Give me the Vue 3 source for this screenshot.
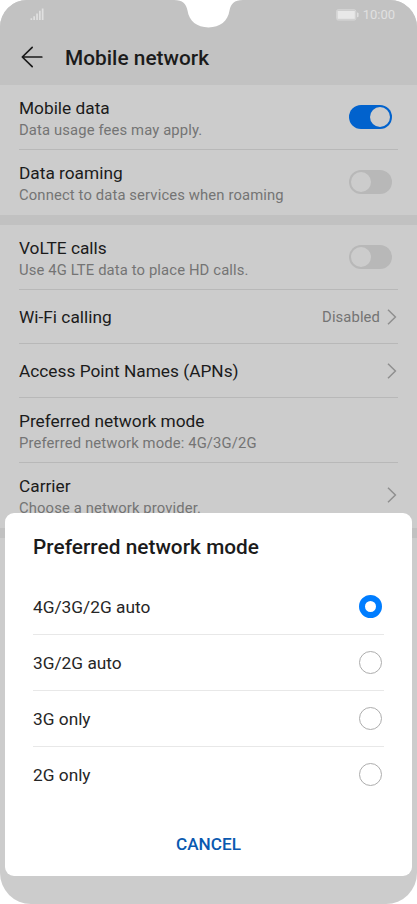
<script setup>
import { ref } from 'vue'

const groups = [
  [
    { title: 'Mobile data', sub: 'Data usage fees may apply.', toggle: true, on: true },
    { title: 'Data roaming', sub: 'Connect to data services when roaming', toggle: true, on: false },
  ],
  [
    { title: 'VoLTE calls', sub: 'Use 4G LTE data to place HD calls.', toggle: true, on: false },
    { title: 'Wi-Fi calling', value: 'Disabled', link: true },
    { title: 'Access Point Names (APNs)', link: true },
    { title: 'Preferred network mode', sub: 'Preferred network mode: 4G/3G/2G' },
    { title: 'Carrier', sub: 'Choose a network provider.', link: true },
  ],
]
const options = ['4G/3G/2G auto', '3G/2G auto', '3G only', '2G only']
const selected = ref(0)
</script>

<template>
  <div class="phone">
    <header class="top">
      <div class="status">
        <svg class="signal" width="14" height="13" viewBox="0 0 14 13">
          <path d="M.5 10.2h1.7V12H.5zM3.3 8.2H5V12H3.3zM6.2 5.4h1.7V12H6.2zM9 2.8h1.7V12H9zM11.8.4h1.7V12h-1.7z" fill="#e0e0e0" />
        </svg>
        <div class="status-right">
          <svg width="23" height="12" viewBox="0 0 23 12">
            <rect x=".6" y=".7" width="19.2" height="10.4" rx="1.6" fill="#cecece" stroke="#d6d6d6" stroke-width="1" />
            <rect x="1.6" y="2" width="17.2" height="7.8" fill="#e8e8e8" />
            <path d="M21 3.6q1.600 0 1.600 1v2.600q0 1-1.600 1z" fill="#dedede" />
          </svg>
          <span class="clock">10:00</span>
        </div>
      </div>
      <div class="bar">
        <svg width="22" height="22" viewBox="0 0 22 22" fill="none" stroke="#1b1b1b" stroke-width="1.7" stroke-linecap="round" stroke-linejoin="round">
          <path d="M11.200 1.300 1.300 11l9.900 9.700M1.600 11h19.200" />
        </svg>
        <h1>Mobile network</h1>
      </div>
    </header>

    <main>
      <section v-for="(group, g) in groups" :key="g" class="group">
        <div v-for="row in group" :key="row.title" class="row" :class="{ tall: row.sub }">
          <div class="text">
            <div class="title">{{ row.title }}</div>
            <div v-if="row.sub" class="sub">{{ row.sub }}</div>
          </div>
          <span v-if="row.value" class="value">{{ row.value }}</span>
          <span v-if="row.toggle" class="toggle" :class="{ on: row.on }"><i /></span>
          <svg v-if="row.link" class="chevron" width="10" height="16" viewBox="0 0 10 16" fill="none" stroke="#8f8f8f" stroke-width="1.5">
            <path d="m1 .8 7.400 7.200L1 15.200" />
          </svg>
        </div>
      </section>
    </main>

    <svg class="notch" width="69" height="28" viewBox="0 0 69 28">
      <path d="M0 0C9 .3 12 3.500 13.500 10.500C15 21 23 27.400 34.500 27.400C46 27.400 54 21 55.500 10.500C57 3.500 60 .3 69 0z" fill="#fff" />
    </svg>

    <div class="dialog" role="dialog">
      <h2>Preferred network mode</h2>
      <div class="options">
        <div v-for="(option, i) in options" :key="option" class="option" @click="selected = i">
          <span>{{ option }}</span>
          <span class="radio" :class="{ checked: selected === i }" />
        </div>
      </div>
      <button class="cancel">CANCEL</button>
    </div>
  </div>
</template>

<style>
body {
  background: #fff;
}
</style>

<style scoped>
.phone {
  position: relative;
  box-sizing: border-box;
  width: 417px;
  height: 904px;
  overflow: hidden;
  background: #ccc;
  border-radius: 27px 27px 31px 31px;
  font-family: Roboto, 'Liberation Sans', sans-serif;
  color: #1b1b1b;
}
.top {
  height: 85px;
  background: #c2c2c2;
}
.status {
  display: flex;
  justify-content: space-between;
  align-items: center;
  height: 29px;
  padding: 0 22px 0 30px;
}
.signal {
  margin-bottom: 1px;
}
.status-right {
  display: flex;
  align-items: center;
  gap: 4px;
}
.clock {
  font-size: 13px;
  line-height: 16px;
  color: #e0e0e0;
}
.bar {
  display: flex;
  align-items: center;
  gap: 22px;
  height: 56px;
  padding-left: 21px;
}
h1,
h2 {
  margin: 0;
  font-weight: 500;
  font-size: 20.8px;
  line-height: 26px;
  letter-spacing: 0.03px;
}
.bar h1 {
  padding-top: 2px;
}
.group + .group {
  border-top: 10px solid #c1c1c1;
}
.group:last-child {
  border-bottom: 10px solid #c1c1c1;
}
.row {
  display: flex;
  align-items: center;
  box-sizing: border-box;
  height: 54px;
  margin: 0 19px;
  border-bottom: 1px solid #b8b8b8;
}
.row.tall {
  height: 65px;
}
.row:last-child {
  border-bottom-color: transparent;
}
.text {
  flex: 1;
}
.tall .text {
  padding-top: 3px;
}
.title {
  font-size: 17.3px;
  line-height: 22px;
}
.sub {
  font-size: 14.8px;
  line-height: 22px;
  letter-spacing: 0.13px;
  color: #747474;
}
.value {
  margin-right: 7px;
  font-size: 14.8px;
  line-height: 22px;
  letter-spacing: 0.1px;
  color: #747474;
}
.toggle {
  display: flex;
  box-sizing: border-box;
  width: 43px;
  height: 24px;
  margin-right: 6px;
  padding: 2px;
  border-radius: 12px;
  background: #b8b8b8;
}
.toggle i {
  width: 20px;
  height: 20px;
  border-radius: 50%;
  background: #ccc;
}
.toggle.on {
  justify-content: flex-end;
  background: #0162cd;
}
.chevron {
  margin-right: 1px;
}
.notch {
  position: absolute;
  top: 0;
  left: 174px;
}
.dialog {
  position: absolute;
  top: 513px;
  left: 5px;
  box-sizing: border-box;
  width: 407px;
  height: 363px;
  padding: 21px 28px 0;
  background: #fff;
  border-radius: 9px;
}
.options {
  margin-top: 19px;
}
.option {
  display: flex;
  justify-content: space-between;
  align-items: center;
  box-sizing: border-box;
  height: 56px;
  border-bottom: 1px solid #e8e8e8;
  font-size: 17.3px;
  line-height: 22px;
  color: #262626;
}
.option:last-child {
  border-bottom-color: transparent;
}
.radio {
  box-sizing: border-box;
  width: 23px;
  height: 23px;
  margin: 0 2px 1px 0;
  border: 1px solid #adadad;
  border-radius: 50%;
}
.radio.checked {
  border: 6px solid #007dff;
}
.cancel {
  display: block;
  margin: 30px auto 0;
  padding: 0;
  border: 0;
  background: none;
  font: 500 17.2px/22px Roboto, 'Liberation Sans', sans-serif;
  color: #0a59b0;
}
</style>
